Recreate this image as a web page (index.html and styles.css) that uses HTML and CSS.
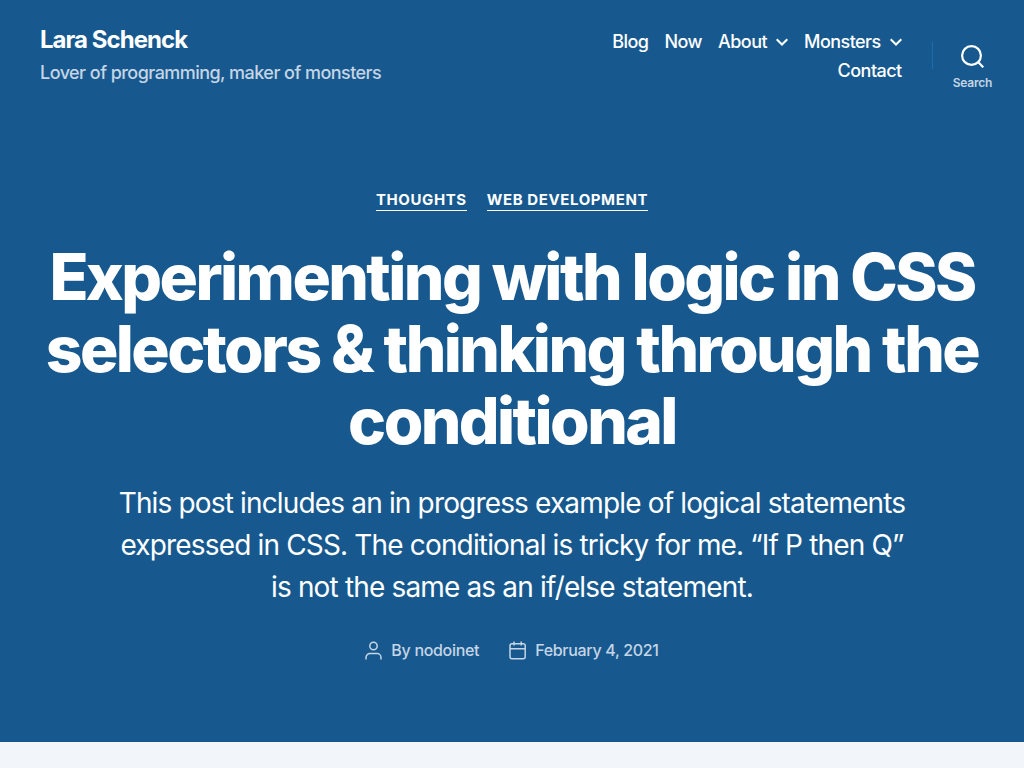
FILE: index.html
```html
<!DOCTYPE html>
<html lang="en">
<head>
<meta charset="utf-8">
<meta name="viewport" content="width=device-width, initial-scale=1">
<title>Experimenting with logic in CSS selectors &amp; thinking through the conditional – Lara Schenck</title>
<link rel="stylesheet" href="styles.css">
</head>
<body>
<header class="site-header">
  <div class="site-titles">
    <a class="site-title" href="#">Lara Schenck</a>
    <p class="site-description">Lover of programming, maker of monsters</p>
  </div>
  <div class="header-navigation">
    <nav aria-label="Primary">
      <ul class="menu">
        <li><a href="#">Blog</a></li>
        <li><a href="#">Now</a></li>
        <li class="has-children"><a href="#">About</a><svg class="chevron" viewBox="0 0 12 8" aria-hidden="true"><path d="m0.700 1.200 5.300 5.300 5.300-5.300"/></svg></li>
        <li class="has-children"><a href="#">Monsters</a><svg class="chevron" viewBox="0 0 12 8" aria-hidden="true"><path d="m0.700 1.200 5.300 5.300 5.300-5.300"/></svg></li>
        <li><a href="#">Contact</a></li>
      </ul>
    </nav>
    <div class="search-wrapper">
      <button class="search-toggle" type="button">
        <svg class="search-icon" viewBox="0 0 23 23" aria-hidden="true"><circle cx="10.500" cy="10.500" r="9.400"/><path d="m17.300 17.300 5 5"/></svg>
        <span>Search</span>
      </button>
    </div>
  </div>
</header>
<main>
  <article>
    <header class="entry-header">
      <div class="entry-categories">
        <a href="#">Thoughts</a>
        <a href="#">Web Development</a>
      </div>
      <h1 class="entry-title">Experimenting with logic in CSS selectors &amp; thinking through the conditional</h1>
      <p class="intro-text">This post includes an in progress example of logical statements expressed in CSS. The conditional is tricky for me. “If P then Q” is not the same as an if/else statement.</p>
      <ul class="post-meta">
        <li>
          <svg class="meta-icon" viewBox="0 0 17 19" aria-hidden="true"><circle cx="8.500" cy="5" r="3.700"/><path d="M1 18.500v-2a4 4 0 0 1 4-4h7a4 4 0 0 1 4 4v2"/></svg>
          <span>By <a href="#">nodoinet</a></span>
        </li>
        <li>
          <svg class="meta-icon" viewBox="0 0 17 19" aria-hidden="true"><rect x="1" y="2.800" width="15.200" height="15" rx="2"/><path d="M1 7.700h15M5 .5v4M12.200.5v4"/></svg>
          <a href="#">February 4, 2021</a>
        </li>
      </ul>
    </header>
  </article>
</main>
</body>
</html>
```
FILE: styles.css
```css
* {
  box-sizing: border-box;
}

body {
  margin: 0;
  background: #f2f6fa;
  color: #fff;
  font-family: Inter, "Liberation Sans", sans-serif;
  font-size: 18px;
}

a {
  color: inherit;
  text-decoration: none;
}

p,
ul {
  margin: 0;
  padding: 0;
}

ul {
  list-style: none;
}

svg {
  flex: none;
  fill: none;
  stroke: currentColor;
}

.site-header {
  display: flex;
  align-items: flex-start;
  justify-content: space-between;
  gap: 40px;
  padding: 24px 0 20px 40px;
  background: #17598e;
}

.site-titles {
  display: flex;
  flex-direction: column;
  gap: 6px;
}

.site-title {
  font-size: 24px;
  font-weight: 700;
  line-height: 32px;
  letter-spacing: -0.04em;
}

.site-description {
  color: #c5d5e5;
  font-weight: 500;
  line-height: 22px;
  letter-spacing: -0.03em;
}

.header-navigation {
  display: flex;
  align-items: flex-start;
}

.menu {
  display: flex;
  flex-wrap: wrap;
  justify-content: flex-end;
  gap: 7px 16px;
  width: 330px;
  padding: 7px 30px 0 0;
  font-weight: 500;
  line-height: 22px;
  letter-spacing: -0.03em;
}

.has-children {
  display: flex;
  align-items: center;
  gap: 9px;
}

.chevron {
  width: 12px;
  height: 8px;
  stroke-width: 2;
}

.search-wrapper {
  display: flex;
  align-items: flex-start;
  padding-top: 18px;
}

.search-wrapper::before {
  content: "";
  width: 1px;
  height: 27px;
  background: #1c6cb0;
}

.search-toggle {
  display: flex;
  flex-direction: column;
  align-items: center;
  gap: 8px;
  padding: 3px 32px 0 20px;
  border: 0;
  background: none;
  color: #fff;
  font-family: inherit;
}

.search-toggle span {
  color: #c5d5e5;
  font-size: 12px;
  font-weight: 600;
  line-height: 14px;
  letter-spacing: -0.02em;
}

.search-icon {
  width: 23px;
  height: 23px;
  stroke-width: 2.2;
}

.entry-header {
  display: flex;
  flex-direction: column;
  align-items: center;
  padding: 80px 40px 82px;
  background: #17598e;
  text-align: center;
}

.entry-categories {
  display: flex;
  gap: 20px;
  margin-bottom: 30px;
}

.entry-categories a {
  border-bottom: 1px solid;
  font-size: 15px;
  font-weight: 700;
  line-height: 20px;
  letter-spacing: 0.04em;
  text-transform: uppercase;
}

.entry-title {
  margin: 0 0 25px;
  font-size: 64px;
  font-weight: 800;
  line-height: 72px;
  letter-spacing: -0.04em;
}

.intro-text {
  max-width: 800px;
  margin-bottom: 32px;
  font-size: 28px;
  line-height: 42px;
  letter-spacing: -0.03em;
}

.post-meta {
  display: flex;
  gap: 30px;
  color: #c5d5e5;
  font-size: 16px;
  font-weight: 500;
  line-height: 20px;
  letter-spacing: -0.02em;
}

.post-meta li {
  display: flex;
  align-items: center;
  gap: 9px;
}

.meta-icon {
  width: 17px;
  height: 19px;
  stroke-width: 1.5;
}
```
